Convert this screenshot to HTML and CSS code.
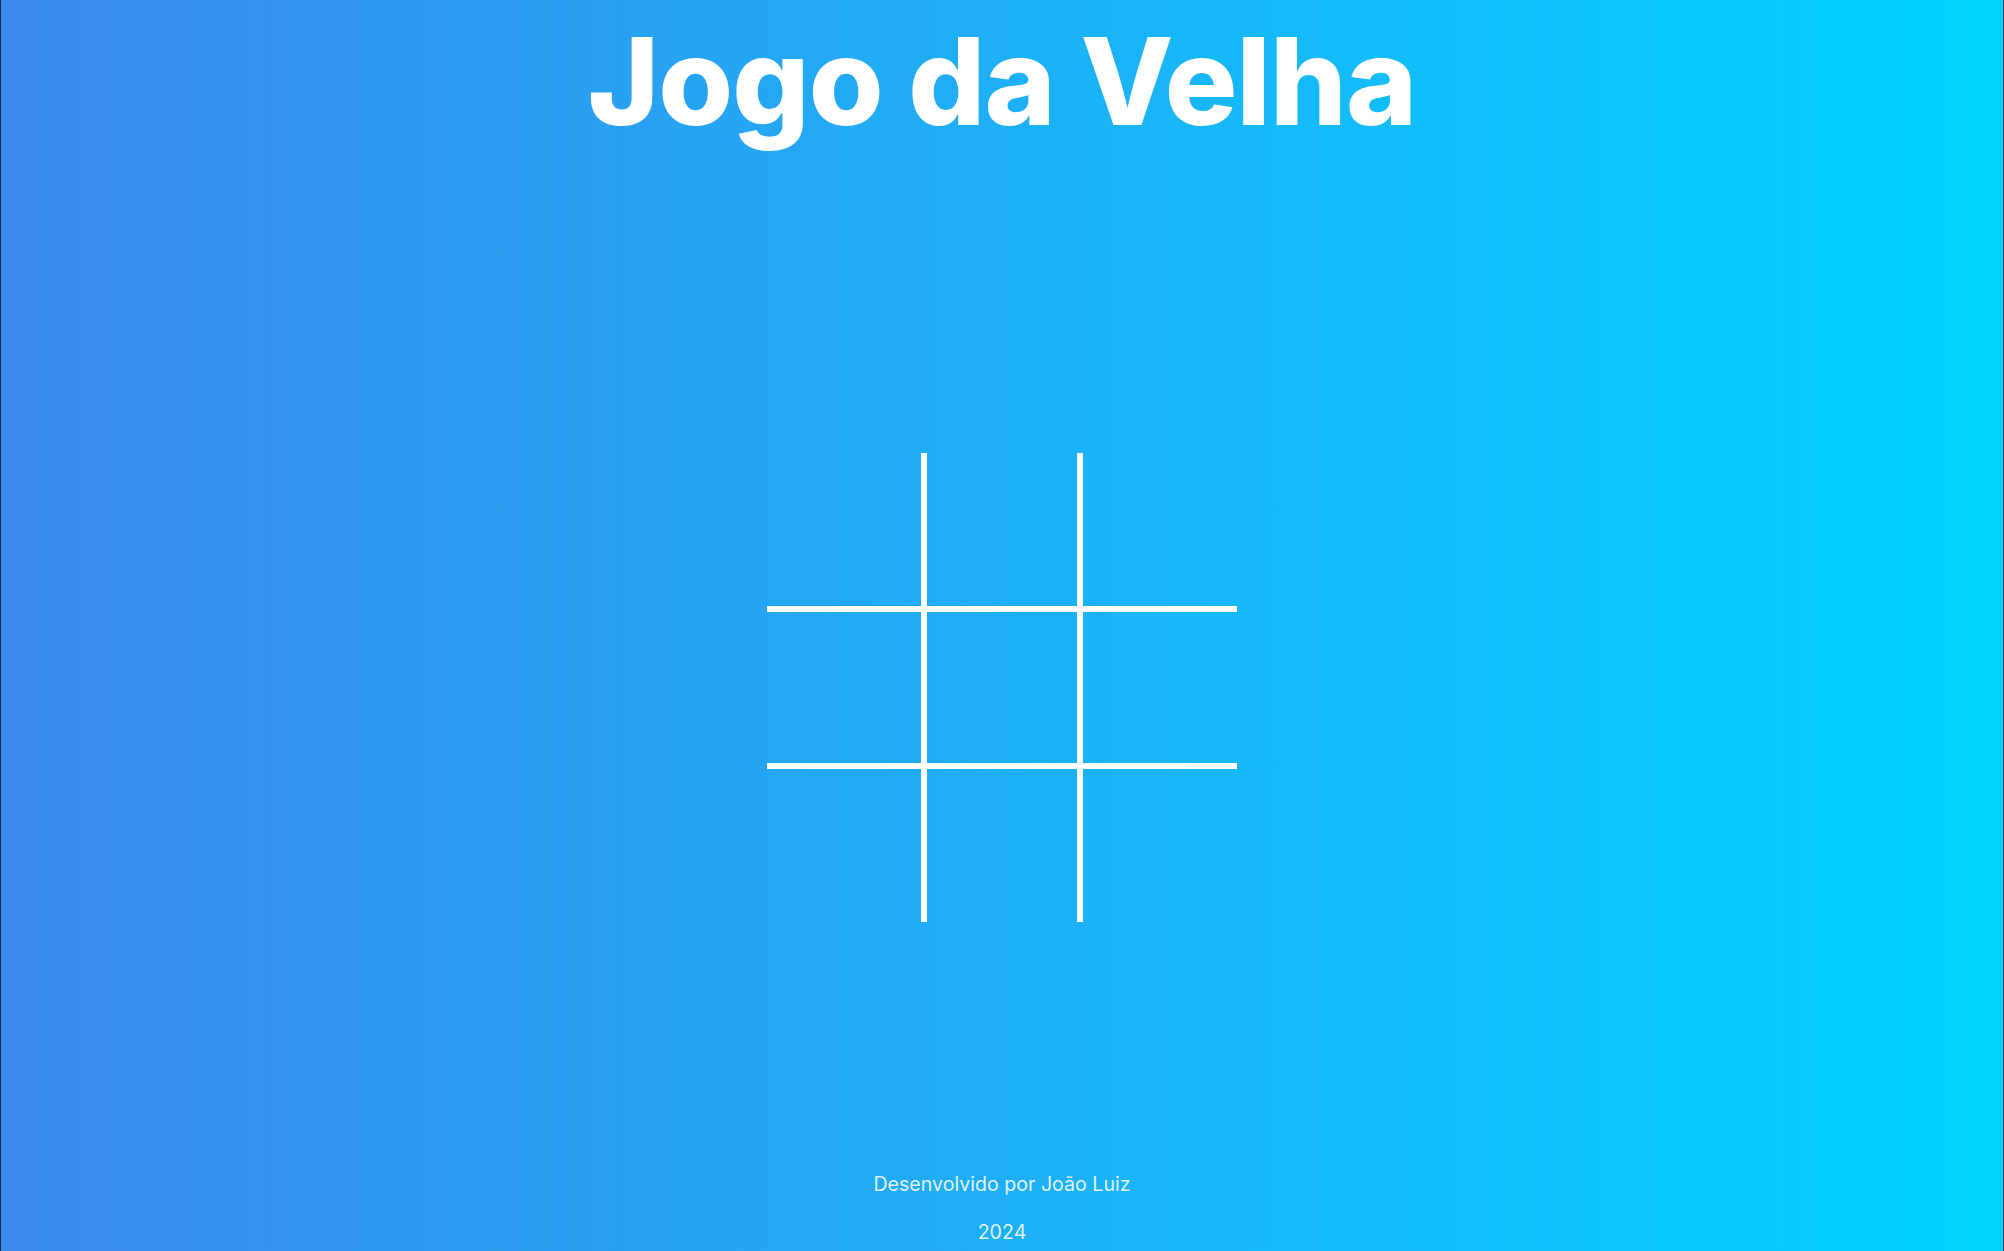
FILE: index.html
```html
<!DOCTYPE html>
<html lang="pt-BR">
<head>
<meta charset="utf-8">
<title>Jogo da Velha</title>
<link rel="stylesheet" href="styles.css">
</head>
<body>
<div class="page">
  <h1 class="title">Jogo da Velha</h1>
  <main class="board-area">
    <div class="board">
      <div class="cell"></div>
      <div class="cell"></div>
      <div class="cell"></div>
      <div class="cell"></div>
      <div class="cell"></div>
      <div class="cell"></div>
      <div class="cell"></div>
      <div class="cell"></div>
      <div class="cell"></div>
    </div>
  </main>
  <footer class="footer">
    <p class="footer-line">Desenvolvido por João Luiz</p>
    <p class="footer-line">2024</p>
  </footer>
</div>
</body>
</html>
```
FILE: styles.css
```css
html, body {
  margin: 0;
  padding: 0;
}

body {
  background: linear-gradient(to right, #3b8aed, #00d4ff);
  min-height: 100vh;
  font-family: Inter, "Noto Sans", "Liberation Sans", sans-serif;
  color: #ffffff;
  overflow: hidden;
}

.page {
  min-height: 100vh;
  box-sizing: border-box;
  border-left: 1px solid #1e2a3a;
  border-right: 1px solid #1e2a3a;
  display: flex;
  flex-direction: column;
  align-items: center;
}

.title {
  margin: 9px 0 0 0;
  font-size: 121px;
  font-weight: 800;
  letter-spacing: -0.9px;
  line-height: 145px;
  text-align: center;
}

.board-area {
  display: flex;
  justify-content: center;
  padding-top: 299px;
}

.board {
  display: grid;
  grid-template-columns: repeat(3, 1fr);
  grid-template-rows: repeat(3, 1fr);
  width: 470px;
  height: 469px;
}

.cell {
  box-sizing: border-box;
  border: 0 solid #ffffff;
}

.cell:nth-child(3n+1),
.cell:nth-child(3n+2) {
  border-right-width: 3px;
}

.cell:nth-child(3n+2),
.cell:nth-child(3n) {
  border-left-width: 3px;
}

.cell:nth-child(-n+6) {
  border-bottom-width: 3px;
}

.cell:nth-child(n+4) {
  border-top-width: 3px;
}

.footer {
  margin-top: 250px;
  text-align: center;
  color: rgba(255, 255, 255, 0.88);
  font-size: 19.6px;
}

.footer-line {
  margin: 0 0 24px 0;
  line-height: 24px;
}
```
